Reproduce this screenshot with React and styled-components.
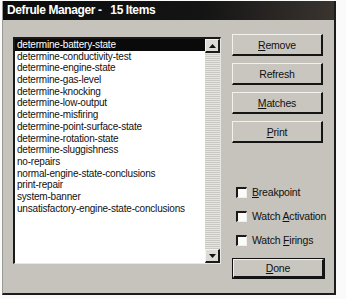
import React from "react";
import styled, { createGlobalStyle } from "styled-components";

const Global = createGlobalStyle`
  html, body { margin: 0; padding: 0; background: #fafafa; }
  body { padding: 1px 0 0 2px; font-family: "Liberation Sans", Arial, sans-serif; }
`;

const Dialog = styled.div`
  width: 334px;
  height: 294px;
  box-sizing: border-box;
  background: #c5c3bc;
  border-left: 1px solid #9a9892;
  border-right: 2px solid #1c1c1c;
  border-bottom: 2px solid #1c1c1c;
  display: flex;
  flex-direction: column;
`;

const TitleBar = styled.div`
  height: 19px;
  background: linear-gradient(90deg, #0c0c0c 0%, #141414 60%, #3a3430 100%);
  color: #fff;
  font-weight: bold;
  font-size: 12px;
  letter-spacing: -0.4px;
  line-height: 19px;
  padding-left: 4px;
  white-space: pre;
`;

const Body = styled.div`
  display: flex;
  padding: 14px 0 0 10px;
  gap: 11px;
`;

const ListBox = styled.div`
  margin-top: 3px;
  width: 208px;
  height: 227px;
  box-sizing: border-box;
  border-top: 2px solid #1a1a1a;
  border-left: 2px solid #1a1a1a;
  border-right: 1px solid #e8e8e4;
  border-bottom: 1px solid #e8e8e4;
  background: #fff;
  display: flex;
`;

const Items = styled.ul`
  flex: 1;
  margin: 0;
  padding: 0;
  list-style: none;
  overflow: hidden;
`;

const Item = styled.li`
  height: 11.7px;
  line-height: 11.7px;
  font-size: 10px;
  letter-spacing: -0.2px;
  padding-left: 2px;
  white-space: nowrap;
  color: ${(p) => (p.$selected ? "#fff" : "#111")};
  background: ${(p) => (p.$selected ? "#0a0a0a" : "transparent")};
`;

const ScrollBar = styled.div`
  width: 15px;
  display: flex;
  flex-direction: column;
  background-color: #e6e5e0;
  background-image: repeating-linear-gradient(0deg, #c9c8c2 0 1px, transparent 1px 2px);
`;

const Track = styled.div`
  flex: 1;
`;

const ArrowButton = styled.div`
  width: 15px;
  height: 14px;
  box-sizing: border-box;
  background: #dcdbd6;
  border-top: 1px solid #f4f4f0;
  border-left: 1px solid #f4f4f0;
  border-right: 2px solid #1a1a1a;
  border-bottom: 2px solid #1a1a1a;
  display: flex;
  align-items: center;
  justify-content: center;
`;

const Side = styled.div`
  width: 91px;
  display: flex;
  flex-direction: column;
`;

const Button = styled.button`
  width: 91px;
  height: ${(p) => p.$h || 22}px;
  margin-bottom: ${(p) => p.$gap || 0}px;
  box-sizing: border-box;
  background: #c8c6bf;
  border: none;
  border-top: 1px solid #f2f1ec;
  border-left: 1px solid #f2f1ec;
  border-right: 2px solid #151515;
  border-bottom: 2px solid #151515;
  font-family: "Liberation Sans", Arial, sans-serif;
  font-size: 10.5px;
  letter-spacing: -0.2px;
  color: #111;
  padding: 0;
  outline: ${(p) => (p.$default ? "1px solid #111" : "none")};
`;

const Checks = styled.div`
  margin-top: 42px;
  display: flex;
  flex-direction: column;
  gap: 10px;
  padding-left: 4px;
`;

const CheckRow = styled.label`
  display: flex;
  align-items: center;
  gap: 5px;
  height: 14px;
  font-size: 10.5px;
  letter-spacing: -0.2px;
  color: #111;
  white-space: nowrap;
`;

const Box = styled.span`
  flex: none;
  width: 11px;
  height: 11px;
  box-sizing: border-box;
  background: #fbfbf8;
  border-top: 2px solid #1a1a1a;
  border-left: 2px solid #1a1a1a;
  border-right: 1px solid #eee;
  border-bottom: 1px solid #eee;
`;

const DoneWrap = styled.div`
  margin-top: 11px;
  padding-left: 1px;
`;

const items = [
  "determine-battery-state",
  "determine-conductivity-test",
  "determine-engine-state",
  "determine-gas-level",
  "determine-knocking",
  "determine-low-output",
  "determine-misfiring",
  "determine-point-surface-state",
  "determine-rotation-state",
  "determine-sluggishness",
  "no-repairs",
  "normal-engine-state-conclusions",
  "print-repair",
  "system-banner",
  "unsatisfactory-engine-state-conclusions",
];

const Arrow = ({ down }) => (
  <svg width="7" height="4" viewBox="0 0 7 4">
    <path d={down ? "M0 0H7L3.5 4Z" : "M0 4H7L3.5 0Z"} fill="#111" />
  </svg>
);

export default function App() {
  return (
    <>
      <Global />
      <Dialog>
        <TitleBar>{"Defrule Manager -   15 Items"}</TitleBar>
        <Body>
          <ListBox>
            <Items>
              {items.map((t, i) => (
                <Item key={t} $selected={i === 0}>
                  {t}
                </Item>
              ))}
            </Items>
            <ScrollBar>
              <ArrowButton>
                <Arrow />
              </ArrowButton>
              <Track />
              <ArrowButton>
                <Arrow down />
              </ArrowButton>
            </ScrollBar>
          </ListBox>
          <Side>
            <Button $gap={7}>
              <u>R</u>emove
            </Button>
            <Button $gap={7}>Refresh</Button>
            <Button $gap={7}>
              <u>M</u>atches
            </Button>
            <Button>
              <u>P</u>rint
            </Button>
            <Checks>
              <CheckRow>
                <Box />
                <span>
                  <u>B</u>reakpoint
                </span>
              </CheckRow>
              <CheckRow>
                <Box />
                <span>
                  Watch <u>A</u>ctivation
                </span>
              </CheckRow>
              <CheckRow>
                <Box />
                <span>
                  Watch <u>F</u>irings
                </span>
              </CheckRow>
            </Checks>
            <DoneWrap>
              <Button $default $h={19}>
                <u>D</u>one
              </Button>
            </DoneWrap>
          </Side>
        </Body>
      </Dialog>
    </>
  );
}
